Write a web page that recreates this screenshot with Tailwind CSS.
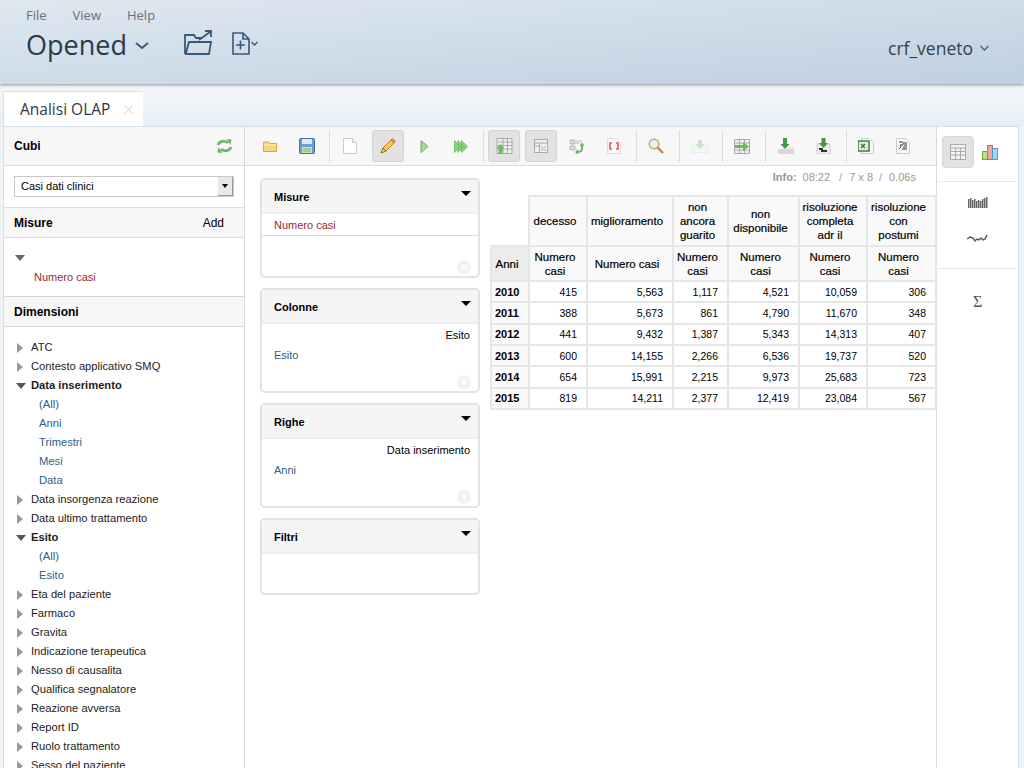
<!DOCTYPE html>
<html lang="it">
<head>
<meta charset="utf-8">
<title>Analisi OLAP</title>
<script src="https://cdn.jsdelivr.net/npm/@tailwindcss/browser@4"></script>
</head>
<body class="w-[1024px] h-[768px] overflow-hidden bg-[#eef3f7] font-['Liberation_Sans',Arial,sans-serif] text-[11px] text-black">
<header class="relative z-10 h-[84px] bg-gradient-to-br from-[#dfe8f0] to-[#bfd0e1] shadow-[0_1px_3px_rgba(60,70,80,0.6)] font-['Open_Sans',sans-serif] flex justify-between">
  <div class="pl-[26px] pt-[7px]">
    <nav class="flex gap-[26px] text-[13px] leading-[17px] text-[#68727c]"><span>File</span><span>View</span><span>Help</span></nav>
    <div class="flex items-center -mt-[1px] h-[44px]">
      <span class="text-[27px] leading-[40px] text-[#2b3a4a]">Opened</span>
      <svg class="ml-[8px] mt-[2px]" width="14" height="8" viewBox="0 0 14 8" fill="none" stroke="#36597a" stroke-width="2"><path d="M1 1l6 5 6-5"/></svg>
      <svg class="ml-[35px] -mt-[6px]" width="28" height="25" viewBox="0 0 28 25" fill="none" stroke="#36597a" stroke-width="1.800"><path d="M1 24V5h9l2 3h5M1 24h24l2-12H5L2 23M15 10L26 2M21 1h6v6"/></svg>
      <svg class="ml-[20px] -mt-[4px]" width="18" height="23" viewBox="0 0 18 23" fill="none" stroke="#36597a" stroke-width="1.600"><path d="M1 1h10l6 6v15H1zM11 1v6h6M4 13h9M8.500 8.500v9"/></svg>
      <svg class="ml-[1px] -mt-[4px]" width="7" height="5" viewBox="0 0 7 5" fill="none" stroke="#36597a" stroke-width="1.300"><path d="M.5 1l3 3 3-3"/></svg>
    </div>
  </div>
  <div class="flex items-center h-[20px] mt-[38px] pr-[35px]">
    <span class="text-[17.500px] leading-[20px] text-[#34404d]">crf_veneto</span>
    <svg class="ml-[7px]" width="9" height="6" viewBox="0 0 9 6" fill="none" stroke="#44637f" stroke-width="1.300"><path d="M.5 1l4 4 4-4"/></svg>
  </div>
</header>

<div class="h-[42px] bg-gradient-to-b from-[#f5f8fa] to-[#e6eef4] pl-[3px] pt-[7px]">
  <div class="w-[140px] h-[35px] pt-[1px] bg-white border-t border-l border-[#d5e3ee] flex items-center pl-[16px] font-['Open_Sans',sans-serif] text-[15.500px] text-[#2b3a4a]">
    <span>Analisi OLAP</span>
    <svg class="ml-[14px]" width="9" height="9" viewBox="0 0 9 9" stroke="#c3cfd9" stroke-width="1"><path d="M.5.5l8 8M8.500.5l-8 8"/></svg>
  </div>
</div>

<main class="flex h-[642px] ml-[3px] w-[1016px] border-l border-r border-t border-[#cfe0ec] bg-white">
  <aside class="w-[241px] shrink-0 border-r border-[#d8d8d8] overflow-hidden">
    <div class="h-[39px] bg-[#f7f7f7] border-b border-[#dcdcdc] flex items-center justify-between pl-[10px] pr-[11px]">
      <b class="text-[12px]">Cubi</b>
      <svg width="17" height="16" viewBox="0 0 17 16" fill="none" stroke="#6db36b" stroke-width="2.600"><path d="M2 7c1-4 7-5 10-2M15 9c-1 4-7 5-10 2"/><path d="M10.500 1l5 .5-1 5.500zM6.500 15l-5-.5 1-5.500z" fill="#6db36b" stroke="none"/></svg>
    </div>
    <div class="h-[41px] pt-[10px] pl-[10px]">
      <div class="relative w-[220px] h-[21px] border border-[#c8c8c8] pl-[6px] leading-[19px] text-[11px]">Casi dati clinici
        <span class="absolute right-0 top-0 w-[15px] h-[19px] bg-[#e8e8e8] border-r border-b border-[#999] flex items-center justify-center"><span class="w-0 h-0 border-x-[3px] border-x-transparent border-t-[4px] border-t-black"></span></span>
      </div>
    </div>
    <div class="h-[31px] bg-[#f7f7f7] border-y border-[#dcdcdc] flex items-center justify-between pl-[10px] pr-[20px] text-[12px]"><b>Misure</b><span>Add</span></div>
    <div class="h-[59px] border-b border-[#d4d4d4] pl-[11px] pt-[17px]">
      <span class="block w-0 h-0 border-x-[5px] border-x-transparent border-t-[6px] border-t-[#666]"></span>
      <div class="pl-[19px] mt-[10px] text-[#97283b] leading-[13px]">Numero casi</div>
    </div>
    <div class="h-[30px] bg-[#f7f7f7] border-b border-[#dcdcdc] flex items-center pl-[10px] text-[12px]"><b>Dimensioni</b></div>
    <ul class="pt-[11px] pl-[13px] text-[#222] text-[11.200px]">
      <li class="h-[19px] flex items-center gap-[8px]"><span class="w-0 h-0 border-y-[5px] border-y-transparent border-l-[6px] border-l-[#999]"></span><span>ATC</span></li>
      <li class="h-[19px] flex items-center gap-[8px]"><span class="w-0 h-0 border-y-[5px] border-y-transparent border-l-[6px] border-l-[#999]"></span><span>Contesto applicativo SMQ</span></li>
      <li class="h-[19px] flex items-center gap-[5px]"><span class="w-0 h-0 border-x-[5px] border-x-transparent border-t-[6px] border-t-[#555] -ml-[1px]"></span><b>Data inserimento</b></li>
      <li class="h-[19px] flex items-center pl-[22px] text-[#2c5f8a]">(All)</li>
      <li class="h-[19px] flex items-center pl-[22px] text-[#2c5f8a]">Anni</li>
      <li class="h-[19px] flex items-center pl-[22px] text-[#2c5f8a]">Trimestri</li>
      <li class="h-[19px] flex items-center pl-[22px] text-[#2c5f8a]">Mesi</li>
      <li class="h-[19px] flex items-center pl-[22px] text-[#2c5f8a]">Data</li>
      <li class="h-[19px] flex items-center gap-[8px]"><span class="w-0 h-0 border-y-[5px] border-y-transparent border-l-[6px] border-l-[#999]"></span><span>Data insorgenza reazione</span></li>
      <li class="h-[19px] flex items-center gap-[8px]"><span class="w-0 h-0 border-y-[5px] border-y-transparent border-l-[6px] border-l-[#999]"></span><span>Data ultimo trattamento</span></li>
      <li class="h-[19px] flex items-center gap-[5px]"><span class="w-0 h-0 border-x-[5px] border-x-transparent border-t-[6px] border-t-[#555] -ml-[1px]"></span><b>Esito</b></li>
      <li class="h-[19px] flex items-center pl-[22px] text-[#2c5f8a]">(All)</li>
      <li class="h-[19px] flex items-center pl-[22px] text-[#2c5f8a]">Esito</li>
      <li class="h-[19px] flex items-center gap-[8px]"><span class="w-0 h-0 border-y-[5px] border-y-transparent border-l-[6px] border-l-[#999]"></span><span>Eta del paziente</span></li>
      <li class="h-[19px] flex items-center gap-[8px]"><span class="w-0 h-0 border-y-[5px] border-y-transparent border-l-[6px] border-l-[#999]"></span><span>Farmaco</span></li>
      <li class="h-[19px] flex items-center gap-[8px]"><span class="w-0 h-0 border-y-[5px] border-y-transparent border-l-[6px] border-l-[#999]"></span><span>Gravita</span></li>
      <li class="h-[19px] flex items-center gap-[8px]"><span class="w-0 h-0 border-y-[5px] border-y-transparent border-l-[6px] border-l-[#999]"></span><span>Indicazione terapeutica</span></li>
      <li class="h-[19px] flex items-center gap-[8px]"><span class="w-0 h-0 border-y-[5px] border-y-transparent border-l-[6px] border-l-[#999]"></span><span>Nesso di causalita</span></li>
      <li class="h-[19px] flex items-center gap-[8px]"><span class="w-0 h-0 border-y-[5px] border-y-transparent border-l-[6px] border-l-[#999]"></span><span>Qualifica segnalatore</span></li>
      <li class="h-[19px] flex items-center gap-[8px]"><span class="w-0 h-0 border-y-[5px] border-y-transparent border-l-[6px] border-l-[#999]"></span><span>Reazione avversa</span></li>
      <li class="h-[19px] flex items-center gap-[8px]"><span class="w-0 h-0 border-y-[5px] border-y-transparent border-l-[6px] border-l-[#999]"></span><span>Report ID</span></li>
      <li class="h-[19px] flex items-center gap-[8px]"><span class="w-0 h-0 border-y-[5px] border-y-transparent border-l-[6px] border-l-[#999]"></span><span>Ruolo trattamento</span></li>
      <li class="h-[19px] flex items-center gap-[8px]"><span class="w-0 h-0 border-y-[5px] border-y-transparent border-l-[6px] border-l-[#999]"></span><span>Sesso del paziente</span></li>
    </ul>
  </aside>

  <section class="w-[692px] shrink-0 border-r border-[#d8d8d8]">
    <div class="h-[39px] bg-[#f7f7f7] border-b border-[#dcdcdc] flex items-center pl-[9px]">
      <span class="w-[32px] h-[32px] flex items-center justify-center"><svg width="14" height="11" viewBox="0 0 14 11"><path d="M.5 1h5l1 1.500h7v8H.5z" fill="#f6d77e" stroke="#dba545"/><path d="M.5 4h13" stroke="#fff3c4"/></svg></span>
      <span class="w-[32px] h-[32px] ml-[5px] flex items-center justify-center"><svg width="16" height="16" viewBox="0 0 16 16"><rect x=".5" y=".5" width="15" height="15" rx="1" fill="#6f9bd8" stroke="#3f6fb0"/><rect x="3" y="1" width="10" height="5" fill="#dfe9f7"/><rect x="3" y="9" width="10" height="6" fill="#cde6b0"/><path d="M4 11h8M4 13h8" stroke="#7fb356"/></svg></span>
      <span class="w-px h-[32px] bg-[#ddd] ml-[6px]"></span>
      <span class="w-[32px] h-[32px] ml-[4px] flex items-center justify-center"><svg width="14" height="16" viewBox="0 0 14 16"><path d="M.5.5h9l4 4v11H.5z" fill="#fff" stroke="#ccc"/><path d="M9.500.5v4h4" fill="#eee" stroke="#ccc"/></svg></span>
      <span class="w-[32px] h-[32px] ml-[6px] bg-[#e2e2e2] border border-[#d4d4d4] rounded-[3px] flex items-center justify-center"><svg width="16" height="16" viewBox="0 0 16 16"><path d="M3 10L11 2l3 3-8 8z" fill="#f5cc4f" stroke="#c48a2a"/><path d="M11 2l1.500-1.200 2.700 2.700L14 5z" fill="#e88f6a" stroke="#b66"/><path d="M3 10l-2 5 5-2z" fill="#f1d9a8" stroke="#8a5a20"/></svg></span>
      <span class="w-[32px] h-[32px] ml-[4px] flex items-center justify-center"><svg width="9" height="13" viewBox="0 0 9 13"><path d="M1 .5l7 6-7 6z" fill="#a5dc98" stroke="#5fb255"/></svg></span>
      <span class="w-[32px] h-[32px] ml-[5px] flex items-center justify-center"><svg width="14" height="13" viewBox="0 0 14 13" fill="#8fd482" stroke="#5fb255" stroke-width=".7"><path d="M.5.5l6 6-6 6zM4 .5l6 6-6 6zM7.500.5l6 6-6 6z"/></svg></span>
      <span class="w-px h-[32px] bg-[#ddd] ml-[6px]"></span>
      <span class="w-[32px] h-[32px] ml-[4px] bg-[#e2e2e2] border border-[#d4d4d4] rounded-[3px] flex items-center justify-center"><svg width="18" height="18" viewBox="0 0 18 18"><path d="M2 1.500h15v15H2zM2 5h15M2 8.500h15M2 12h15M8 1.500v15M12.500 1.500v15" fill="#f0f0f0" stroke="#aaa"/><path d="M5.500 7l4 4.500H7.500V17h-4v-5.500H1.500z" fill="#6dbb6a"/></svg></span>
      <span class="w-[32px] h-[32px] ml-[5px] bg-[#e2e2e2] border border-[#d4d4d4] rounded-[3px] flex items-center justify-center"><svg width="14" height="14" viewBox="0 0 14 14" fill="none" stroke="#aaa"><rect x=".5" y=".5" width="13" height="13" fill="#f0f0f0"/><path d="M.5 4h13M.5 7h5M5.500 4v9M7 7l5 5M12 7l-5 5"/></svg></span>
      <span class="w-[32px] h-[32px] ml-[4px] flex items-center justify-center"><svg width="16" height="15" viewBox="0 0 16 15"><path d="M1 1h5v4H1zM1 7h5v4H1zM7 2h6M7 4h4" stroke="#bbb" fill="#d8d8d8"/><path d="M13 6v4c0 2-2 3-5 3" fill="none" stroke="#6db36b" stroke-width="2"/><path d="M10.500 7L13 3.500 15.500 7zM9 10v6l-3-3z" fill="#6db36b"/></svg></span>
      <span class="w-[32px] h-[32px] ml-[5px] flex items-center justify-center"><svg width="14" height="16" viewBox="0 0 14 16"><path d="M.5.5h9l4 4v11H.5z" fill="#fafafa" stroke="#ddd"/><path d="M5 5H3v6h2M9 5h2v6H9" fill="none" stroke="#e8544f" stroke-width="1.600"/></svg></span>
      <span class="w-px h-[32px] bg-[#ddd] ml-[6px]"></span>
      <span class="w-[32px] h-[32px] ml-[3px] flex items-center justify-center"><svg width="16" height="16" viewBox="0 0 16 16"><circle cx="6" cy="6" r="4.700" fill="#eaf2f7" stroke="#cf9a52" stroke-width="1.400"/><path d="M9.500 9.500L15 15" stroke="#c9823c" stroke-width="2.400"/></svg></span>
      <span class="w-px h-[32px] bg-[#ddd] ml-[7px]"></span>
      <span class="w-[32px] h-[32px] ml-[4px] flex items-center justify-center"><svg width="16" height="15" viewBox="0 0 16 15"><rect x=".5" y="7.500" width="15" height="6" fill="#f7f7f7" stroke="#e8ece8"/><path d="M6 1h4v4h2.500L8 10 3.500 5H6z" fill="#c8e3c6"/></svg></span>
      <span class="w-px h-[32px] bg-[#ddd] ml-[6px]"></span>
      <span class="w-[32px] h-[32px] ml-[3px] flex items-center justify-center"><svg width="16" height="15" viewBox="0 0 16 15"><path d="M.5.500h15v14H.5zM.5 4h15M.5 7.500h15M.5 11h15M5.500.5v14M10.500.5v14" fill="#f2f2f2" stroke="#aaa"/><path d="M1 6h8V3l6 4.500L9 12V9H1z" fill="#6dbb4e"/></svg></span>
      <span class="w-px h-[32px] bg-[#ddd] ml-[7px]"></span>
      <span class="w-[32px] h-[32px] ml-[4px] flex items-center justify-center"><svg width="16" height="16" viewBox="0 0 16 16"><path d="M0 11h16v5H0z" fill="#d8d8d8"/><path d="M5 8h11v3H5z" fill="#eee"/><path d="M5 0h4v6h2.500L7 11 2.500 6H5z" fill="#3f9a46"/></svg></span>
      <span class="w-[32px] h-[32px] ml-[5px] flex items-center justify-center"><svg width="15" height="16" viewBox="0 0 15 16"><path d="M1 6h13v10H1z" fill="#eee" stroke="#ccc"/><path d="M5.500 0h4v5H12L7.500 10 3 5h2.500z" fill="#3f9a46"/><path d="M5 13h6M3 11h4" stroke="#333" stroke-width="2"/></svg></span>
      <span class="w-px h-[32px] bg-[#ddd] ml-[7px]"></span>
      <span class="w-[32px] h-[32px] ml-[3px] flex items-center justify-center"><svg width="16" height="16" viewBox="0 0 16 16"><path d="M3.500.5h8l4 4v11h-12z" fill="#fafafa" stroke="#ccc"/><rect x="0" y="3" width="11" height="10" fill="#dfeedd" stroke="#2d7a32" stroke-width="1.400"/><path d="M3 6l4 4M7 6l-4 4" stroke="#2d7a32" stroke-width="1.300"/></svg></span>
      <span class="w-[32px] h-[32px] ml-[5px] flex items-center justify-center"><svg width="14" height="16" viewBox="0 0 14 16" fill="none"><path d="M.5.5h9l4 4v11H.5z" fill="#fafafa" stroke="#ccc"/><path d="M3 4h3c2 0 2 3 0 3H4M5 7c0 2-.5 3-2 4M8 5h3M8 7h3M7 9h4M6 11h5" stroke="#333"/></svg></span>
    </div>
    <div class="flex">
      <div class="w-[220px] ml-[15px] mt-[12px] shrink-0">
        <div class="h-[100px] border-2 border-[#e2e2e2] rounded-[5px] relative">
          <div class="h-[34px] pt-[2px] bg-[#f5f5f5] border-b-2 border-[#eee] flex items-center pl-[12px]"><b>Misure</b><span class="absolute right-[7px] top-[11px] w-0 h-0 border-x-[5px] border-x-transparent border-t-[5px] border-t-black"></span></div>
          <div class="h-[22px] border-b border-[#f0d0d4] pl-[12px] leading-[23px] text-[#97283b]">Numero casi</div>
          <span class="absolute right-[7px] bottom-[2px] w-[14px] h-[14px] rounded-full bg-[#f1f1f1] text-white flex items-center justify-center text-[11px] leading-none font-bold">×</span>
        </div>
        <div class="h-[105px] mt-[10px] border-2 border-[#e2e2e2] rounded-[5px] relative">
          <div class="h-[34px] pt-[2px] bg-[#f5f5f5] border-b-2 border-[#eee] flex items-center pl-[12px]"><b>Colonne</b><span class="absolute right-[7px] top-[11px] w-0 h-0 border-x-[5px] border-x-transparent border-t-[5px] border-t-black"></span></div>
          <div class="text-right pr-[8px] pt-[5px] leading-[13px]">Esito</div>
          <div class="pl-[12px] pt-[7px] leading-[13px] text-[#2c5f8a]">Esito</div>
          <span class="absolute right-[7px] bottom-[2px] w-[14px] h-[14px] rounded-full bg-[#f1f1f1] text-white flex items-center justify-center text-[11px] leading-none font-bold">×</span>
        </div>
        <div class="h-[105px] mt-[10px] border-2 border-[#e2e2e2] rounded-[5px] relative">
          <div class="h-[34px] pt-[2px] bg-[#f5f5f5] border-b-2 border-[#eee] flex items-center pl-[12px]"><b>Righe</b><span class="absolute right-[7px] top-[11px] w-0 h-0 border-x-[5px] border-x-transparent border-t-[5px] border-t-black"></span></div>
          <div class="text-right pr-[8px] pt-[5px] leading-[13px]">Data inserimento</div>
          <div class="pl-[12px] pt-[7px] leading-[13px] text-[#2c5f8a]">Anni</div>
          <span class="absolute right-[7px] bottom-[2px] w-[14px] h-[14px] rounded-full bg-[#f1f1f1] text-white flex items-center justify-center text-[11px] leading-none font-bold">×</span>
        </div>
        <div class="h-[77px] mt-[10px] border-2 border-[#e2e2e2] rounded-[5px] relative">
          <div class="h-[34px] pt-[2px] bg-[#f5f5f5] border-b-2 border-[#eee] flex items-center pl-[12px]"><b>Filtri</b><span class="absolute right-[7px] top-[11px] w-0 h-0 border-x-[5px] border-x-transparent border-t-[5px] border-t-black"></span></div>
        </div>
      </div>
      <div class="ml-[10px] w-[445px] shrink-0">
        <div class="h-[29px] pt-[5px] pr-[19px] flex justify-end text-[11px] text-[#999] leading-[13px]"><b>Info:</b><span class="ml-[6px]">08:22</span><span class="ml-[9px]">/</span><span class="ml-[7px]">7 x 8</span><span class="ml-[6px]">/</span><span class="ml-[7px]">0.06s</span></div>
        <table class="table-fixed border-collapse w-[445px] text-[10.500px] leading-[14px]">
          <colgroup><col class="w-[38px]"><col class="w-[58px]"><col class="w-[86px]"><col class="w-[55px]"><col class="w-[71px]"><col class="w-[68px]"><col class="w-[69px]"></colgroup>
          <tbody>
            <tr class="h-[50px] text-center text-[11.500px] [-webkit-text-stroke:0.2px] [&>td]:pr-[6px]">
              <td></td>
              <td class="border-2 border-[#e6e6e6] bg-[#f9f9f9]">decesso</td>
              <td class="border-2 border-[#e6e6e6] bg-[#f9f9f9]">miglioramento</td>
              <td class="border-2 border-[#e6e6e6] bg-[#f9f9f9]">non<br>ancora<br>guarito</td>
              <td class="border-2 border-[#e6e6e6] bg-[#f9f9f9]">non<br>disponibile</td>
              <td class="border-2 border-[#e6e6e6] bg-[#f9f9f9]">risoluzione<br>completa<br>adr il</td>
              <td class="border-2 border-[#e6e6e6] bg-[#f9f9f9]">risoluzione<br>con<br>postumi</td>
            </tr>
            <tr class="h-[35px] text-center text-[11.500px] [-webkit-text-stroke:0.2px] [&>td]:pr-[6px]">
              <td class="border-2 border-[#e6e6e6] bg-[#ececec]">Anni</td>
              <td class="border-2 border-[#e6e6e6] bg-[#f9f9f9]">Numero<br>casi</td>
              <td class="border-2 border-[#e6e6e6] bg-[#f9f9f9]">Numero casi</td>
              <td class="border-2 border-[#e6e6e6] bg-[#f9f9f9]">Numero<br>casi</td>
              <td class="border-2 border-[#e6e6e6] bg-[#f9f9f9]">Numero<br>casi</td>
              <td class="border-2 border-[#e6e6e6] bg-[#f9f9f9]">Numero<br>casi</td>
              <td class="border-2 border-[#e6e6e6] bg-[#f9f9f9]">Numero<br>casi</td>
            </tr>
            <tr class="h-[21.330px] text-right">
              <td class="border-2 border-[#e6e6e6] bg-[#f9f9f9] text-left pl-[3px] font-bold text-[11px]">2010</td><td class="border-2 border-[#e6e6e6] pr-[9px]">415</td><td class="border-2 border-[#e6e6e6] pr-[9px]">5,563</td><td class="border-2 border-[#e6e6e6] pr-[9px]">1,117</td><td class="border-2 border-[#e6e6e6] pr-[9px]">4,521</td><td class="border-2 border-[#e6e6e6] pr-[9px]">10,059</td><td class="border-2 border-[#e6e6e6] pr-[9px]">306</td>
            </tr>
            <tr class="h-[21.330px] text-right">
              <td class="border-2 border-[#e6e6e6] bg-[#f9f9f9] text-left pl-[3px] font-bold text-[11px]">2011</td><td class="border-2 border-[#e6e6e6] pr-[9px]">388</td><td class="border-2 border-[#e6e6e6] pr-[9px]">5,673</td><td class="border-2 border-[#e6e6e6] pr-[9px]">861</td><td class="border-2 border-[#e6e6e6] pr-[9px]">4,790</td><td class="border-2 border-[#e6e6e6] pr-[9px]">11,670</td><td class="border-2 border-[#e6e6e6] pr-[9px]">348</td>
            </tr>
            <tr class="h-[21.330px] text-right">
              <td class="border-2 border-[#e6e6e6] bg-[#f9f9f9] text-left pl-[3px] font-bold text-[11px]">2012</td><td class="border-2 border-[#e6e6e6] pr-[9px]">441</td><td class="border-2 border-[#e6e6e6] pr-[9px]">9,432</td><td class="border-2 border-[#e6e6e6] pr-[9px]">1,387</td><td class="border-2 border-[#e6e6e6] pr-[9px]">5,343</td><td class="border-2 border-[#e6e6e6] pr-[9px]">14,313</td><td class="border-2 border-[#e6e6e6] pr-[9px]">407</td>
            </tr>
            <tr class="h-[21.330px] text-right">
              <td class="border-2 border-[#e6e6e6] bg-[#f9f9f9] text-left pl-[3px] font-bold text-[11px]">2013</td><td class="border-2 border-[#e6e6e6] pr-[9px]">600</td><td class="border-2 border-[#e6e6e6] pr-[9px]">14,155</td><td class="border-2 border-[#e6e6e6] pr-[9px]">2,266</td><td class="border-2 border-[#e6e6e6] pr-[9px]">6,536</td><td class="border-2 border-[#e6e6e6] pr-[9px]">19,737</td><td class="border-2 border-[#e6e6e6] pr-[9px]">520</td>
            </tr>
            <tr class="h-[21.330px] text-right">
              <td class="border-2 border-[#e6e6e6] bg-[#f9f9f9] text-left pl-[3px] font-bold text-[11px]">2014</td><td class="border-2 border-[#e6e6e6] pr-[9px]">654</td><td class="border-2 border-[#e6e6e6] pr-[9px]">15,991</td><td class="border-2 border-[#e6e6e6] pr-[9px]">2,215</td><td class="border-2 border-[#e6e6e6] pr-[9px]">9,973</td><td class="border-2 border-[#e6e6e6] pr-[9px]">25,683</td><td class="border-2 border-[#e6e6e6] pr-[9px]">723</td>
            </tr>
            <tr class="h-[21.330px] text-right">
              <td class="border-2 border-[#e6e6e6] bg-[#f9f9f9] text-left pl-[3px] font-bold text-[11px]">2015</td><td class="border-2 border-[#e6e6e6] pr-[9px]">819</td><td class="border-2 border-[#e6e6e6] pr-[9px]">14,211</td><td class="border-2 border-[#e6e6e6] pr-[9px]">2,377</td><td class="border-2 border-[#e6e6e6] pr-[9px]">12,419</td><td class="border-2 border-[#e6e6e6] pr-[9px]">23,084</td><td class="border-2 border-[#e6e6e6] pr-[9px]">567</td>
            </tr>
          </tbody>
        </table>
      </div>
    </div>
  </section>

  <aside class="flex-1">
    <div class="h-[55px] mx-[1px] pt-[9px] pl-[4px] border-b border-[#e8e8e8] flex">
      <span class="w-[32px] h-[32px] bg-[#e2e2e2] border border-[#d4d4d4] rounded-[4px] flex items-center justify-center"><svg width="16" height="16" viewBox="0 0 16 16" fill="#f4f4f4" stroke="#aaa"><path d="M.5.5h15v15H.5zM.5 4h15M.5 7.500h15M.5 11h15M5.500 4v11.500M10.500 4v11.500"/></svg></span>
      <span class="w-[32px] h-[32px] flex items-center justify-center"><svg width="16" height="15" viewBox="0 0 16 15"><rect x=".5" y="6.500" width="5" height="8" fill="#bfe07e" stroke="#6fa84e"/><rect x="5.500" y=".5" width="5" height="14" fill="#f5a49a" stroke="#d9645a"/><rect x="10.500" y="3.500" width="5" height="11" fill="#9fd3ee" stroke="#4d9ccb"/></svg></span>
    </div>
    <div class="h-[87px] mx-[1px] border-b border-[#e8e8e8] pl-[30px] pt-[14px]">
      <svg class="block" width="20" height="12" viewBox="0 0 20 12" fill="#666"><path d="M0 3h1.500v9H0zM2 2h1.500v10H2zM4 4h1.500v8H4zM6 3h1.500v9H6zM8 5h1.500v7H8zM10 4h1.500v8H10zM12 5h1.500v7H12zM14 3h1.500v9H14zM16 2h1.500v10H16zM18 1h1.500v11H18z"/></svg>
      <svg class="block mt-[26px] -ml-[1px]" width="22" height="9" viewBox="0 0 22 9" fill="none" stroke="#555" stroke-width="1.400"><path d="M0 5l3-2 3 1 2 3 2-2 2 1 2-2 2 2 2-1 2-4"/></svg>
    </div>
    <div class="pl-[36px] pt-[25px] font-['Liberation_Serif',serif] text-[16px] leading-[16px] text-[#555]">Σ</div>
  </aside>
</main>
</body>
</html>
